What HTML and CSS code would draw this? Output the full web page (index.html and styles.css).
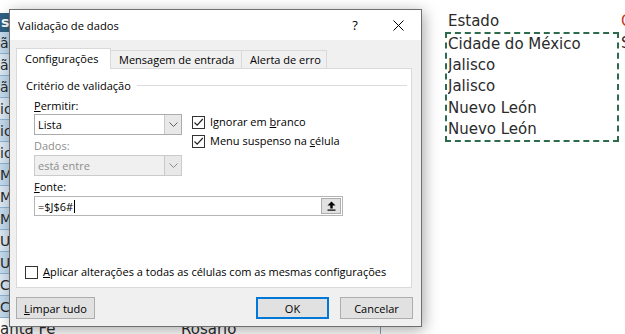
FILE: index.html
```html
<!DOCTYPE html>
<html lang="pt">
<head>
  <meta charset="UTF-8" />
  <title>Validação de dados</title>
  <link rel="stylesheet" href="styles.css">
</head>
<body>
  <div class="sheet">
    <div class="strip">
      <div class="cell head-row">st</div>
      <div class="cell band">ão</div>
      <div class="cell band alt">ão</div>
      <div class="cell band">ão</div>
      <div class="cell band alt">ic</div>
      <div class="cell band">ic</div>
      <div class="cell band alt">ic</div>
      <div class="cell band">Mi</div>
      <div class="cell band alt">Mi</div>
      <div class="cell band">Mi</div>
      <div class="cell band alt">U</div>
      <div class="cell band">U</div>
      <div class="cell band alt">Có</div>
      <div class="cell band">Có</div>
    </div>
    <div class="cell col-a last-row">anta Fe</div>
    <div class="cell col-b last-row">Rosario</div>

    <div class="cell col-d estado">Estado</div>
    <div class="copy-range">
      <div class="cell">Cidade do México</div>
      <div class="cell">Jalisco</div>
      <div class="cell">Jalisco</div>
      <div class="cell">Nuevo León</div>
      <div class="cell">Nuevo León</div>
    </div>
    <div class="cell col-e red">C</div>
    <div class="cell col-e second">S</div>
  </div>

  <div class="dialog">
    <div class="titlebar">
      <span class="title">Validação de dados</span>
      <span class="help">?</span>
      <span class="close">
        <svg width="11" height="11" viewBox="0 0 11 11"><path d="M0.5 0.5 L10.5 10.5 M10.5 0.5 L0.5 10.5" stroke="#000" stroke-width="1" fill="none"/></svg>
      </span>
    </div>

    <div class="dialog-body">
      <div class="tabs">
        <div class="tab active">Configurações</div>
        <div class="tab tab-msg">Mensagem de entrada</div>
        <div class="tab tab-alert">Alerta de erro</div>
      </div>

      <div class="panel">
        <div class="group-title">
          <span>Critério de validação</span>
          <span class="rule"></span>
        </div>

        <div class="fields">
          <div class="fields-left">
            <div class="label"><u>P</u>ermitir:</div>
            <div class="combo">
              <span class="combo-text">Lista</span>
              <span class="combo-btn">
                <svg width="9" height="5" viewBox="0 0 9 5"><path d="M0.5 0.5 L4.5 4.5 L8.5 0.5" stroke="#606060" fill="none"/></svg>
              </span>
            </div>
            <div class="label disabled label-gap">Dados:</div>
            <div class="combo disabled">
              <span class="combo-text">está entre</span>
              <span class="combo-btn">
                <svg width="9" height="5" viewBox="0 0 9 5"><path d="M0.5 0.5 L4.5 4.5 L8.5 0.5" stroke="#8a8a8a" fill="none"/></svg>
              </span>
            </div>
          </div>

          <div class="fields-right">
            <label class="check">
              <span class="box"><svg width="11" height="11" viewBox="0 0 11 11"><path d="M1.5 5.5 L4.2 8.2 L9.8 2" stroke="#222" stroke-width="1.2" fill="none"/></svg></span>
              <span>Ignorar em <u>b</u>ranco</span>
            </label>
            <label class="check">
              <span class="box"><svg width="11" height="11" viewBox="0 0 11 11"><path d="M1.5 5.5 L4.2 8.2 L9.8 2" stroke="#222" stroke-width="1.2" fill="none"/></svg></span>
              <span>Menu suspenso na <u>c</u>élula</span>
            </label>
          </div>
        </div>

        <div class="source">
          <div class="label label-gap"><u>F</u>onte:</div>
          <div class="text-input">
            <span>=$J$6#</span><span class="caret"></span>
            <span class="ref-btn">
              <svg width="9" height="10" viewBox="0 0 9 10"><path d="M4.5 0.5 L8.5 4.5 L5.7 4.5 L5.7 7.5 L3.3 7.5 L3.3 4.5 L0.5 4.5 Z" fill="#000"/><rect x="0.5" y="8.5" width="8" height="1.2" fill="#000"/></svg>
            </span>
          </div>
        </div>

        <label class="check apply">
          <span class="box"></span>
          <span><u>A</u>plicar alterações a todas as células com as mesmas configurações</span>
        </label>
      </div>

      <div class="actions">
        <button class="btn btn-clear"><u>L</u>impar tudo</button>
        <span class="spacer"></span>
        <button class="btn btn-ok">OK</button>
        <button class="btn">Cancelar</button>
      </div>
    </div>
  </div>
</body>
</html>
```

FILE: styles.css
```css
body {
  margin: 0;
  width: 625px;
  height: 334px;
  overflow: hidden;
  position: relative;
  background: #fff;
  font-family: 'DejaVu Sans', sans-serif;
}

/* spreadsheet behind the dialog */

.sheet {
  display: grid;
  grid-template-columns: 181px 200px 64px 174px 1fr;
  grid-template-rows: 10px repeat(15, 22px);
  font-size: 15px;
  color: #2b2b2b;
}

.cell {
  height: 22px;
  line-height: 22px;
  white-space: nowrap;
  overflow: hidden;
  box-sizing: border-box;
}

.strip {
  grid-column: 1;
  grid-row: 2 / span 14;
  display: flex;
  flex-direction: column;
  font-size: 14px;
}

.col-a { grid-column: 1; }
.col-b { grid-column: 2; }
.col-d { grid-column: 4; }
.col-e { grid-column: 5; }

.head-row {
  background: #2f6183;
  color: #fff;
  font-weight: bold;
  padding-left: 1px;
  margin-top: 3px;
  height: 19px;
  line-height: 19px;
}

.band {
  background: #c4dcef;
  border-bottom: 1px solid #8fb5d3;
}

.band.alt {
  background: #dbe9f5;
}

.last-row {
  grid-row: 16;
}

.col-b.last-row {
  border-right: 1px solid #7da2bf;
}

.estado {
  grid-row: 2;
  padding-left: 3px;
}

.copy-range {
  grid-column: 4;
  grid-row: 3 / span 5;
  border: 2px dashed #2d6b4d;
  padding-left: 1px;
  box-sizing: border-box;
  display: flex;
  flex-direction: column;
  justify-content: space-around;
}

.copy-range .cell {
  height: auto;
  line-height: 21px;
}

.col-e {
  padding-left: 2px;
}

.col-e.red {
  grid-row: 2;
  color: #c0392b;
}

.col-e.second {
  grid-row: 3;
}

/* dialog */

.dialog {
  position: absolute;
  left: 9px;
  top: 9px;
  width: 413px;
  height: 318px;
  box-sizing: border-box;
  border: 1px solid #6f6f6f;
  background: #f0f0f0;
  box-shadow: 2px 3px 14px rgba(0, 0, 0, 0.35);
  font-family: 'Open Sans', 'Noto Sans', sans-serif;
  font-size: 11px;
  color: #000;
}

.titlebar {
  height: 30px;
  background: #fff;
  display: flex;
  align-items: center;
  padding-left: 8px;
}

.title {
  flex: 1;
  font-size: 11.2px;
}

.help {
  width: 40px;
  text-align: center;
  font-size: 13px;
}

.close {
  width: 46px;
  display: flex;
  justify-content: center;
}

.dialog-body {
  padding: 8px 8px 0 6px;
}

.tabs {
  display: flex;
  align-items: flex-end;
  height: 20px;
  position: relative;
  z-index: 1;
}

.tab {
  height: 18px;
  line-height: 18px;
  box-sizing: border-box;
  border: 1px solid #d9d9d9;
  border-bottom: none;
  background: #f0f0f0;
  padding-left: 8px;
  margin-left: -1px;
}

.tab.active {
  width: 95px;
  height: 21px;
  line-height: 20px;
  margin-left: 0;
  margin-bottom: -1px;
  background: #fff;
}

.tab-msg { width: 132px; }
.tab-alert { width: 86px; }

.panel {
  height: 220px;
  width: 396px;
  box-sizing: border-box;
  border: 1px solid #d9d9d9;
  background: #fff;
  padding: 9px 4px 7px 9px;
  display: flex;
  flex-direction: column;
}

.group-title {
  display: flex;
  align-items: center;
  line-height: 15px;
}

.group-title .rule {
  flex: 1;
  border-top: 1px solid #dcdcdc;
  margin-left: 6px;
}

.fields {
  display: flex;
  margin: 5px 0 0 8px;
}

.fields-left {
  width: 148px;
}

.label {
  height: 16px;
  line-height: 16px;
}

.label.disabled {
  color: #8d8d8d;
}

.label-gap {
  margin-top: 3px;
}

.combo {
  height: 21px;
  box-sizing: border-box;
  border: 1px solid #acacac;
  background: #fff;
  display: flex;
}

.combo.disabled {
  margin-top: 1px;
  background: #f0f0f0;
  border-color: #cbcbcb;
  color: #8d8d8d;
}

.combo-text {
  flex: 1;
  line-height: 19px;
  padding-left: 3px;
}

.combo-btn {
  width: 16px;
  border-left: 1px solid #c9c9c9;
  background: #e8e8e8;
  display: flex;
  align-items: center;
  justify-content: center;
}

.fields-right {
  margin-left: 10px;
  padding-top: 16px;
  display: flex;
  flex-direction: column;
  gap: 3px;
}

.check {
  display: flex;
  align-items: center;
  gap: 5px;
  line-height: 16px;
  white-space: nowrap;
}

.box {
  width: 13px;
  height: 13px;
  box-sizing: border-box;
  border: 1px solid #333;
  background: #fff;
  display: flex;
  align-items: center;
  justify-content: center;
}

.source {
  margin-left: 8px;
}

.text-input {
  margin-top: 1px;
  width: 309px;
  height: 20px;
  box-sizing: border-box;
  border: 1px solid #b5b5b5;
  display: flex;
  align-items: center;
  padding-left: 3px;
}

.caret {
  width: 1px;
  height: 13px;
  background: #000;
  margin-left: 1px;
}

.ref-btn {
  margin-left: auto;
  margin-right: 1px;
  width: 20px;
  height: 16px;
  box-sizing: border-box;
  border: 1px solid #adadad;
  background: #e1e1e1;
  display: flex;
  align-items: center;
  justify-content: center;
}

.apply {
  margin-top: auto;
  margin-left: -1px;
}

.actions {
  display: flex;
  gap: 11px;
  margin-top: 9px;
}

.spacer {
  flex: 1;
}

.btn {
  height: 22px;
  width: 73px;
  box-sizing: border-box;
  border: 1px solid #adadad;
  background: #e1e1e1;
  font: inherit;
  padding: 0;
  color: #000;
}

.btn-clear {
  width: 79px;
}

.btn-ok {
  border-color: #0078d7;
  box-shadow: inset 0 0 0 1px #0078d7;
}
```
